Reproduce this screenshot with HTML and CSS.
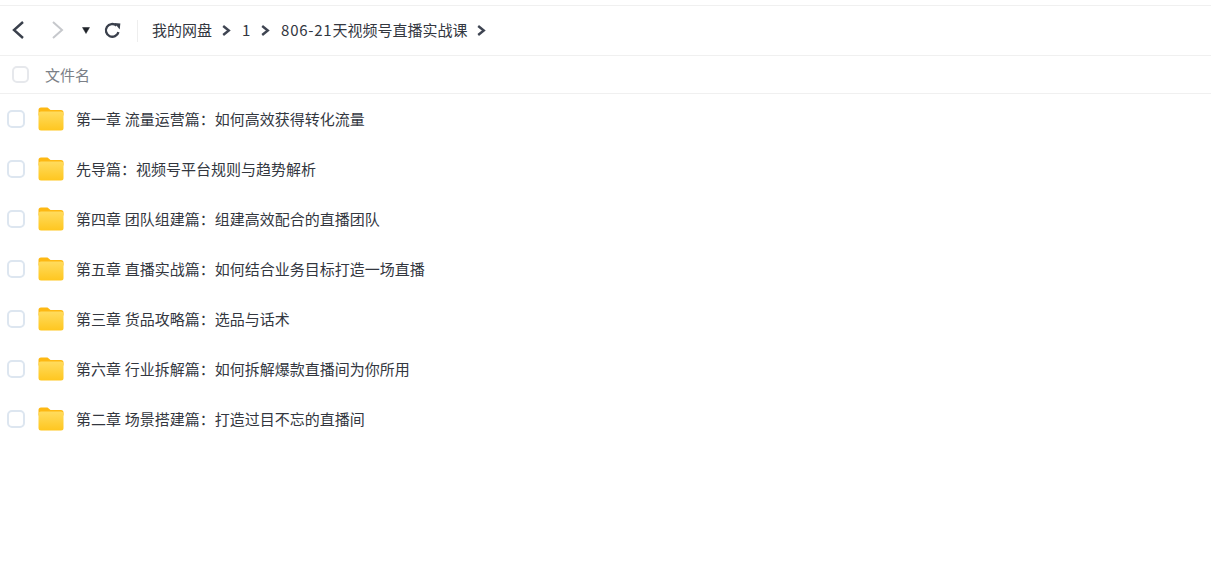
FILE: index.html
```html
<!DOCTYPE html>
<html lang="zh-CN">
<head>
<meta charset="utf-8">
<title>我的网盘</title>
<link rel="stylesheet" href="styles.css">
</head>
<body>
<svg class="defs" width="0" height="0" aria-hidden="true">
  <defs>
    <linearGradient id="fg" x1="0" y1="0" x2="0" y2="1">
      <stop offset="0" stop-color="#ffdc5e"/>
      <stop offset="1" stop-color="#ffc61f"/>
    </linearGradient>
    <symbol id="folder" viewBox="0 0 26 24">
      <path d="M0.5 3a2.5 2.5 0 0 1 2.5-2.5h6.5l3 2.5h10.5a2.5 2.5 0 0 1 2.5 2.5v3h-25z" fill="#fdb813"/>
      <rect x="0.5" y="4.5" width="25" height="19" rx="2.5" fill="url(#fg)"/>
    </symbol>
    <symbol id="crumb" viewBox="0 0 9 11">
      <path d="M1.2 1l5.6 4.5-5.6 4.5" fill="none" stroke="#3f4552" stroke-width="2.4"/>
    </symbol>
  </defs>
</svg>
<div class="page">
  <nav class="toolbar">
    <svg class="nav-arrow" viewBox="0 0 14 20"><path d="M12 2L3 10l9 8" fill="none" stroke="#3a404c" stroke-width="2.4"/></svg>
    <svg class="nav-arrow next" viewBox="0 0 14 20"><path d="M2 2l9 8-9 8" fill="none" stroke="#c6c8cc" stroke-width="2"/></svg>
    <svg class="caret" viewBox="0 0 8 7"><path d="M0.5 0.5h7L4 6.5z" fill="#1f2329" stroke="#1f2329" stroke-width="0.5" stroke-linejoin="round"/></svg>
    <svg class="refresh" viewBox="0 0 16 16"><path d="M13.6 9.5A6 6 0 1 1 11.8 3.4" fill="none" stroke="#3a404c" stroke-width="2.2"/><path d="M9.8 1l5.6 0.4-0.6 5.6z" fill="#3a404c"/></svg>
    <span class="divider"></span>
    <ol class="crumbs">
      <li>我的网盘<svg class="sep"><use href="#crumb"/></svg></li>
      <li><span class="latin">1</span><svg class="sep"><use href="#crumb"/></svg></li>
      <li><span class="latin">806-21</span>天视频号直播实战课<svg class="sep"><use href="#crumb"/></svg></li>
    </ol>
  </nav>
  <div class="head">
    <span class="check head-check"></span>
    <span class="head-name">文件名</span>
  </div>
  <ul class="files">
    <li class="file"><span class="check"></span><svg class="folder"><use href="#folder"/></svg><span class="name">第一章 流量运营篇：如何高效获得转化流量</span></li>
    <li class="file"><span class="check"></span><svg class="folder"><use href="#folder"/></svg><span class="name">先导篇：视频号平台规则与趋势解析</span></li>
    <li class="file"><span class="check"></span><svg class="folder"><use href="#folder"/></svg><span class="name">第四章 团队组建篇：组建高效配合的直播团队</span></li>
    <li class="file"><span class="check"></span><svg class="folder"><use href="#folder"/></svg><span class="name">第五章 直播实战篇：如何结合业务目标打造一场直播</span></li>
    <li class="file"><span class="check"></span><svg class="folder"><use href="#folder"/></svg><span class="name">第三章 货品攻略篇：选品与话术</span></li>
    <li class="file"><span class="check"></span><svg class="folder"><use href="#folder"/></svg><span class="name">第六章 行业拆解篇：如何拆解爆款直播间为你所用</span></li>
    <li class="file"><span class="check"></span><svg class="folder"><use href="#folder"/></svg><span class="name">第二章 场景搭建篇：打造过目不忘的直播间</span></li>
  </ul>
</div>
</body>
</html>
```
FILE: styles.css
```css
* { box-sizing: border-box; }
html, body { margin: 0; padding: 0; background: #fff; }
body {
  height: 576px;
  overflow: hidden;
  font-family: "Noto Sans CJK SC", "Liberation Sans", sans-serif;
  font-size: 15px;
  color: #33373f;
}
.defs { display: block; height: 0; }
.page { padding-top: 5px; }
.toolbar {
  height: 51px;
  padding-left: 11px;
  display: flex;
  align-items: center;
  border-top: 1px solid #f0f0f0;
  border-bottom: 1px solid #f0f0f0;
}
.nav-arrow { width: 14px; height: 20px; flex: none; margin-top: -1px; }
.nav-arrow.next { margin-left: 26px; }
.caret { width: 8px; height: 7px; margin-left: 17px; flex: none; }
.refresh { width: 17px; height: 17px; margin: -1px 0 0 14px; flex: none; }
.divider { width: 1px; height: 22px; background: #eeeeee; margin-left: 16px; flex: none; }
.crumbs {
  list-style: none;
  margin: -1px 0 0 14px;
  padding: 0;
  display: flex;
  align-items: center;
}
.crumbs li { display: flex; align-items: center; line-height: 20px; }
.latin { letter-spacing: 0.75px; }
.sep { width: 9px; height: 11px; margin: 1px 11px 0 10px; flex: none; }
.head {
  height: 38px;
  display: flex;
  align-items: center;
  border-bottom: 1px solid #f0f0f0;
  padding-left: 12px;
}
.head-name { margin-left: 16px; color: #7b7f87; line-height: 20px; }
.check {
  width: 17px;
  height: 17px;
  flex: none;
  border: 2px solid #e6e8ec;
  border-radius: 5px;
  background: #fff;
}
.files { list-style: none; margin: 0; padding: 0; }
.file {
  height: 50px;
  display: flex;
  align-items: center;
  padding-left: 7px;
}
.file .check { width: 18px; height: 18px; border-color: #dde6f0; margin-top: -1px; }
.folder { width: 26px; height: 24px; margin: -1px 13px 0 13px; flex: none; }
.name { line-height: 20px; word-spacing: 0.5px; margin: -1px 0 0 -1px; }
```
